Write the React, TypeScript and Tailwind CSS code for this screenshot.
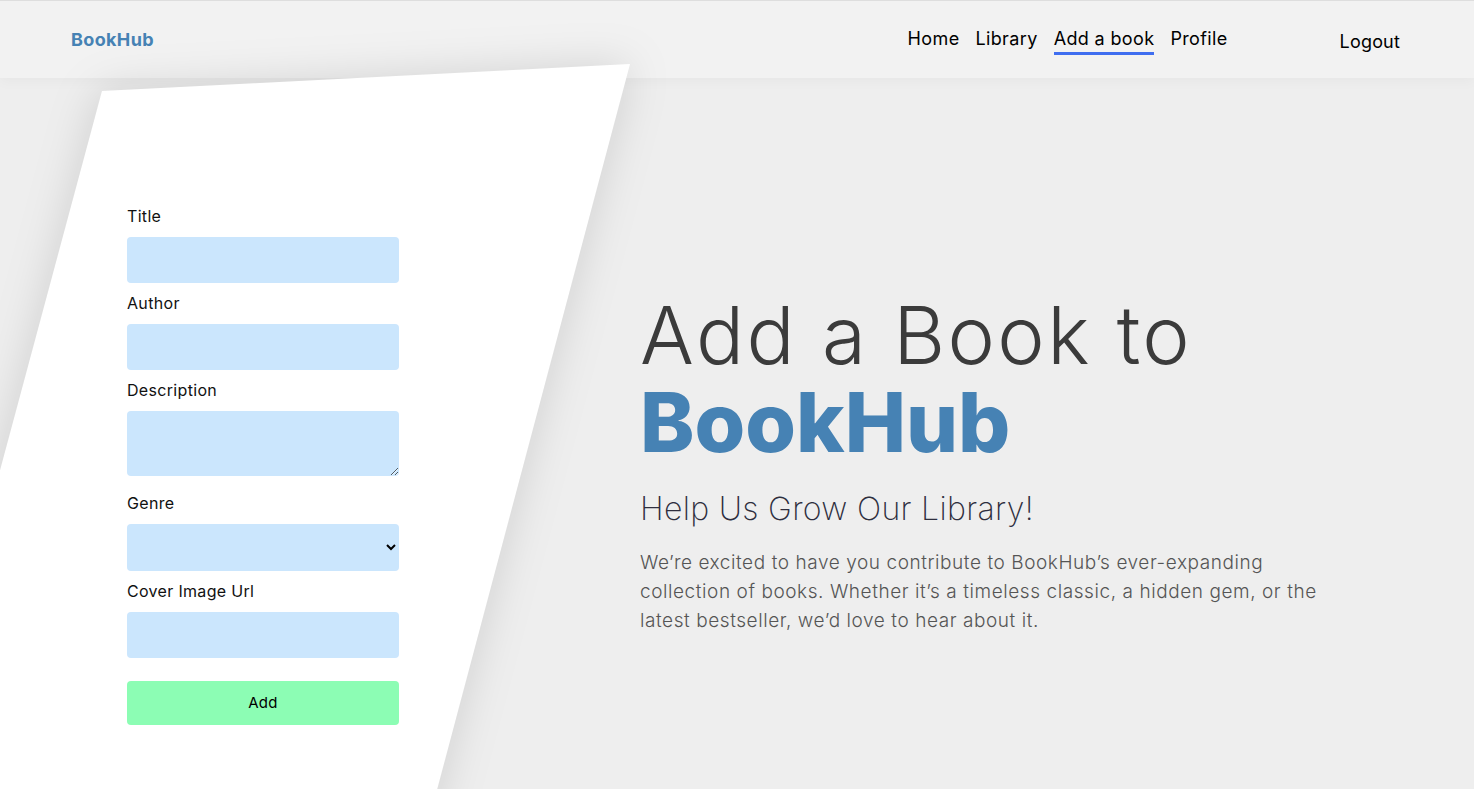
import React from "react";

const navLinks = ["Home", "Library", "Add a book", "Profile"];

const fields = [
	{ label: "Title", kind: "input" },
	{ label: "Author", kind: "input" },
	{ label: "Description", kind: "textarea" },
	{ label: "Genre", kind: "select" },
	{ label: "Cover Image Url", kind: "input" },
];

const App = () => {
	return (
		<div className="relative h-[789px] overflow-hidden bg-[#eeeeee] font-['Inter',sans-serif] text-black">
			{/* navbar */}
			<header className="flex h-[78px] items-center border-t border-[#dedede] bg-[#f2f2f2] pl-[71px] pr-[74px] shadow-[0_4px_12px_rgba(0,0,0,0.03)]">
				<div className="text-[18px] font-bold tracking-[0.02em] text-[#4682b4]">BookHub</div>
				<nav className="ml-auto mr-[112px] flex items-center gap-4 pt-[2px]">
					{navLinks.map((link) => (
						<a
							key={link}
							href="#"
							className={`text-[18px] leading-[26px] tracking-[0.02em] ${
								link === "Add a book" ? "border-b-[3px] border-[#3f6ef0]" : "border-b-[3px] border-transparent"
							}`}
						>
							{link}
						</a>
					))}
				</nav>
				<button className="pt-1 text-[18px] tracking-[0.01em]">Logout</button>
			</header>

			{/* white slanted panel */}
			<svg
				className="pointer-events-none absolute left-0 top-0 overflow-visible drop-shadow-[0_0_22px_rgba(0,0,0,0.13)]"
				width="1474"
				height="789"
			>
				<polygon points="102,91 630,64 429,820 -94,820" fill="#ffffff" />
			</svg>

			<main className="relative flex">
				<form className="ml-[127px] flex w-[272px] flex-col pt-[127px]">
					{fields.map((f, i) => (
						<label key={f.label} className={`flex flex-col ${i === 3 ? "mt-[16px]" : i > 0 ? "mt-[9px]" : ""}`}>
							<span className="mb-[10px] text-[16px] leading-[22px] tracking-[0.02em] text-[#111]">{f.label}</span>
							{f.kind === "input" && <input className="h-[46px] rounded bg-[#cbe6fd] px-2 outline-none" />}
							{f.kind === "textarea" && <textarea className="h-[65px] rounded bg-[#cbe6fd] px-2 outline-none" />}
							{f.kind === "select" && (
								<select className="h-[47px] rounded bg-[#cbe6fd] px-2 outline-none">
									<option></option>
								</select>
							)}
						</label>
					))}
					<button type="button" className="mt-[23px] h-[44px] rounded bg-[#8cfdb4] text-[15px] tracking-[0.02em]">
						Add
					</button>
				</form>

				<section className="ml-[241px] flex w-[690px] flex-col pt-[208px]">
					<h1 className="text-[80px] font-light leading-[97px] tracking-[0.03em] text-[#3b3b3b]">Add a Book to</h1>
					<h2 className="text-[82px] font-extrabold leading-[80px] text-[#4682b4]">BookHub</h2>
					<h3 className="mt-[24px] text-[32px] font-extralight leading-[44px] tracking-[0.01em] text-[#2e2e3e]">
						Help Us Grow Our Library!
					</h3>
					<p className="mt-[17px] text-[19px] font-light leading-[29px] tracking-[0.03em] text-[#555]">
						We’re excited to have you contribute to BookHub’s ever-expanding collection of books. Whether it’s a timeless
						classic, a hidden gem, or the latest bestseller, we’d love to hear about it.
					</p>
				</section>
			</main>
		</div>
	);
};

export default App;
